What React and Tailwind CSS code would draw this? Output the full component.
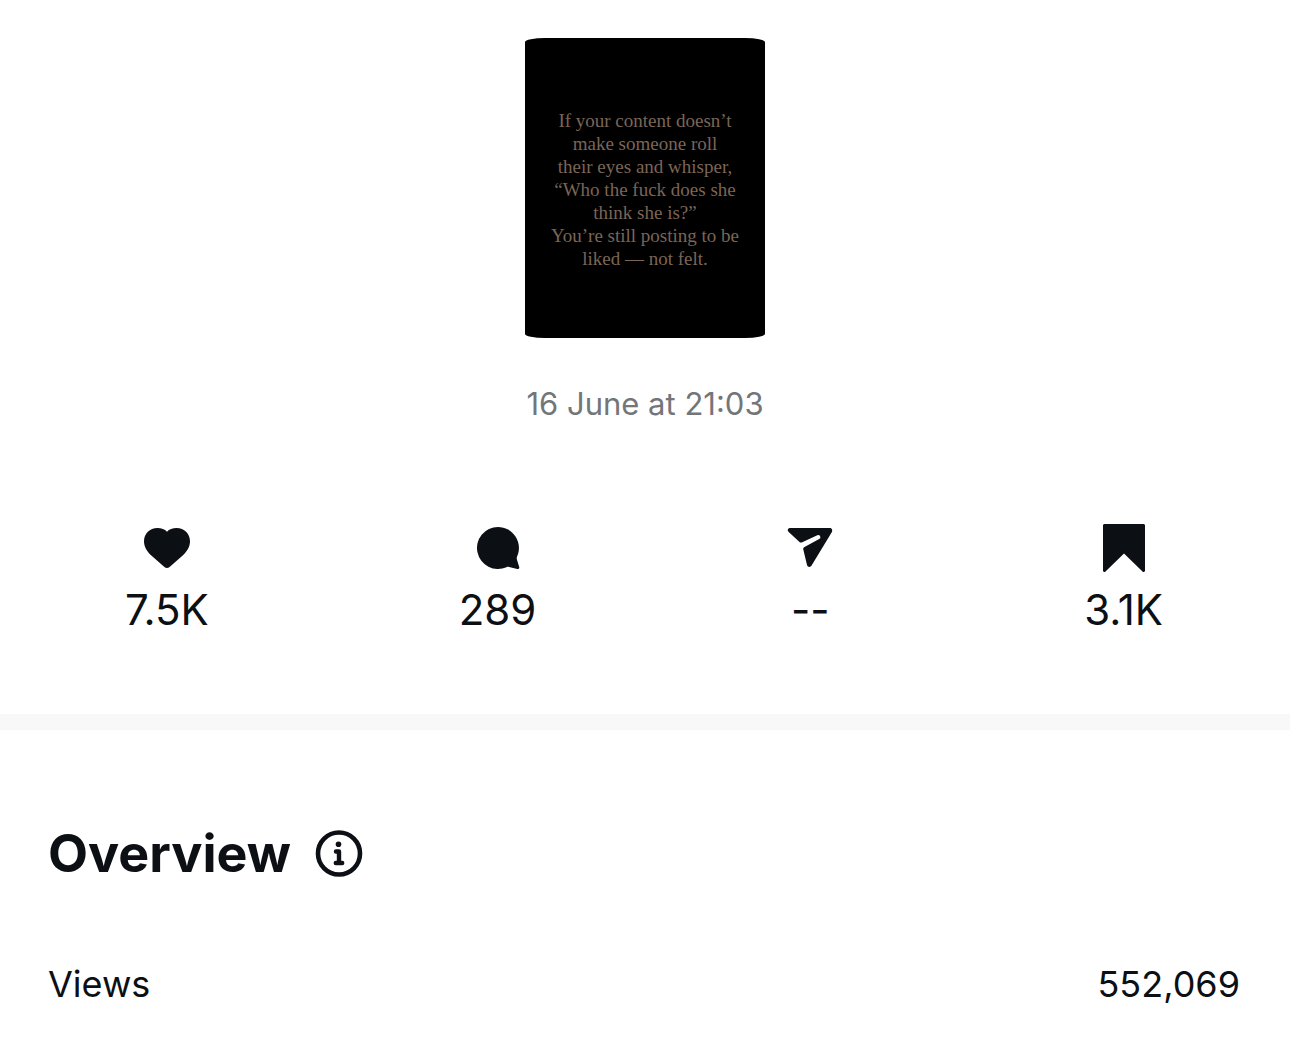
const quoteLines = [
  'If your content doesn’t',
  'make someone roll',
  'their eyes and whisper,',
  '“Who the fuck does she',
  'think she is?”',
  'You’re still posting to be',
  'liked — not felt.',
]

function HeartIcon() {
  return (
    <svg className="h-12 w-12" viewBox="0 0 48 48" fill="currentColor" aria-hidden="true">
      <path d="M24 7.800C21.800 5.200 18.400 4 14.400 4 6.800 4 1 9.700 1 17.200c0 5.800 3 10.300 7.600 14.600L21.400 42.900c1.700 1.500 3.500 1.500 5.200 0l12.800-11.100C44 27.500 47 23 47 17.200 47 9.700 41.200 4 33.600 4c-4 0-7.400 1.200-9.600 3.800z" />
    </svg>
  )
}

function CommentIcon() {
  return (
    <svg className="h-12 w-12" viewBox="0 0 48 48" fill="currentColor" aria-hidden="true">
      <path d="M24 3a21 21 0 1 0 8.500 40.200c.9-.4 1.700-.4 2.600-.2l8.100 2c1.300.3 2.400-.8 2-2.100l-2.300-7.500c-.3-.9-.2-1.700.1-2.600A21 21 0 0 0 24 3z" />
    </svg>
  )
}

function ShareIcon() {
  return (
    <svg className="h-12 w-12" viewBox="0 0 48 48" fill="currentColor" aria-hidden="true">
      <path d="M4.200 4h39.500c2 0 3.200 2.200 2.200 3.900L25.600 41.600c-1.200 2-4 1.600-4.600-.7L17.300 25.600c-.3-1.200.1-2.100 1.200-2.700l14.700-7.900a2.100 2.100 0 0 0-1.900-3.800l-15.600 7.200c-.8.400-1.600.2-2.200-.4L2.700 8C.9 6.300 1.900 4 4.200 4z" />
    </svg>
  )
}

function BookmarkIcon() {
  return (
    <svg className="h-12 w-12" viewBox="0 0 48 48" fill="currentColor" aria-hidden="true">
      <path d="M4.500 0h39C44.300 0 45 .7 45 1.500v45c0 1.400-1.500 2-2.500 1L24 29.500 5.500 47.500c-1 1-2.500.4-2.500-1v-45C3 .7 3.700 0 4.500 0z" />
    </svg>
  )
}

function InfoIcon() {
  return (
    <svg className="h-12 w-12" viewBox="0 0 48 48" fill="none" stroke="currentColor" aria-hidden="true">
      <circle cx="24" cy="23.500" r="21" strokeWidth="4.600" />
      <circle cx="23.500" cy="14.200" r="2.800" fill="currentColor" stroke="none" />
      <path d="M21 21.500h3v11.400M20.800 33h6.400" strokeWidth="4.400" strokeLinecap="round" strokeLinejoin="round" />
    </svg>
  )
}

const stats = [
  { label: 'Likes', value: '7.5K', icon: HeartIcon },
  { label: 'Comments', value: '289', icon: CommentIcon },
  { label: 'Shares', value: '--', icon: ShareIcon },
  { label: 'Saves', value: '3.1K', icon: BookmarkIcon },
]

function Stat({ label, value, icon: Icon }) {
  return (
    <li className="flex flex-col items-center gap-2" aria-label={label}>
      <Icon />
      <span className="text-[42px] leading-[60px]">{value}</span>
    </li>
  )
}

export default function App() {
  return (
    <main className="min-h-screen bg-white font-['Inter',sans-serif] text-[#0c1014]">
      {/* Post preview */}
      <section className="flex flex-col items-center pt-[38px] pb-[74px]">
        <div className="flex h-[300px] w-60 flex-col items-center justify-center rounded-[20px/4px] bg-black pt-0.5 font-['Liberation_Serif',serif] text-[19px] leading-[23px] text-[#7b6557]">
          {quoteLines.map(line => (
            <p key={line} className="whitespace-nowrap">{line}</p>
          ))}
        </div>
        <p className="mt-[46px] text-[31px] leading-10 text-[#737679]">16 June at 21:03</p>

        <ul className="mt-[100px] flex w-full justify-around pr-0.5">
          {stats.map(stat => (
            <Stat key={stat.label} {...stat} />
          ))}
        </ul>
      </section>

      <div className="h-4 bg-[#f8f8f8]" />

      {/* Overview */}
      <section className="pt-[92px] pr-[50px] pl-12">
        <div className="flex items-center gap-6">
          <h1 className="text-[52px] leading-[64px] font-bold">Overview</h1>
          <button type="button" aria-label="About overview">
            <InfoIcon />
          </button>
        </div>
        <dl className="mt-[74px] flex items-center justify-between text-4xl leading-[48px]">
          <dt>Views</dt>
          <dd>552,069</dd>
        </dl>
      </section>
    </main>
  )
}
